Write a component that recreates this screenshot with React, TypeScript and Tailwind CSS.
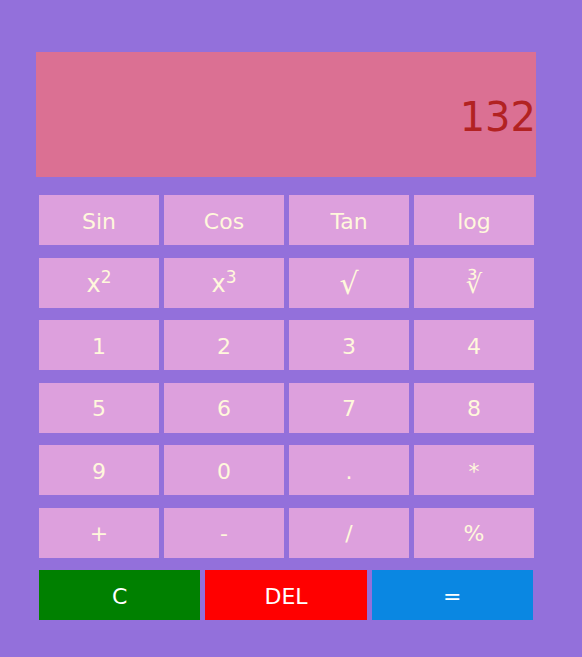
import React from "react";

const keys: React.ReactNode[] = [
  "Sin",
  "Cos",
  "Tan",
  "log",
  <span key="x2" className="text-[24px]">
    x<sup className="text-[17px]">2</sup>
  </span>,
  <span key="x3" className="text-[24px]">
    x<sup className="text-[17px]">3</sup>
  </span>,
  <span key="sqrt" className="text-[30px] leading-none">√</span>,
  <span key="cbrt" className="text-[26px] leading-none">∛</span>,
  "1",
  "2",
  "3",
  "4",
  "5",
  "6",
  "7",
  "8",
  "9",
  "0",
  ".",
  "*",
  "+",
  "-",
  "/",
  "%",
];

export default function App() {
  return (
    <div
      className="min-h-[657px] bg-[#9370DB] pt-[52px] pl-[36px]"
      style={{ fontFamily: '"DejaVu Sans", Verdana, sans-serif' }}
    >
      <div className="w-[500px]">
        {/* display */}
        <div className="h-[125px] bg-[#DB7093] flex items-center justify-end pt-[5px] text-[40px] text-[#B22222]">
          132
        </div>

        {/* keypad */}
        <div className="mt-[18px] pl-[3px]">
          <div className="grid grid-cols-4 w-[495px] gap-x-[5px] gap-y-[12.5px]">
            {keys.map((k, i) => (
              <button
                key={i}
                className="h-[50px] bg-[#DDA0DD] text-[#FFF8DC] text-[22px] flex items-center justify-center pt-[2px]"
              >
                {k}
              </button>
            ))}
          </div>
          <div className="grid grid-cols-3 w-[494px] gap-x-[5px] mt-[12.5px]">
            <button className="h-[50px] bg-[#008000] text-white text-[22px] flex items-center justify-center pt-[2px]">
              C
            </button>
            <button className="h-[50px] bg-[#FF0000] text-white text-[22px] flex items-center justify-center pt-[2px]">
              DEL
            </button>
            <button className="h-[50px] bg-[#0A87E2] text-white text-[22px] flex items-center justify-center pt-[2px]">
              =
            </button>
          </div>
        </div>
      </div>
    </div>
  );
}
